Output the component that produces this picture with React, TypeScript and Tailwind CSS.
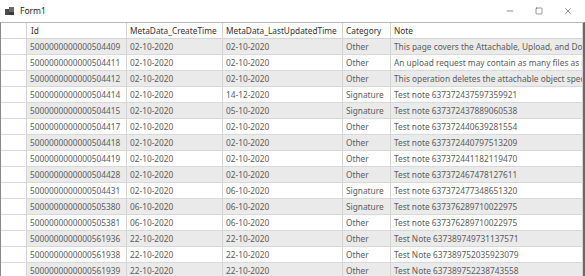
import { Minus, Square, X } from "lucide-react";

type Row = {
  id: string;
  created: string;
  updated: string;
  category: string;
  note: string;
};

const rows: Row[] = [
  { id: "5000000000000504409", created: "02-10-2020", updated: "02-10-2020", category: "Other", note: "This page covers the Attachable, Upload, and Download resources" },
  { id: "5000000000000504411", created: "02-10-2020", updated: "02-10-2020", category: "Other", note: "An upload request may contain as many files as needed" },
  { id: "5000000000000504412", created: "02-10-2020", updated: "02-10-2020", category: "Other", note: "This operation deletes the attachable object specified" },
  { id: "5000000000000504414", created: "02-10-2020", updated: "14-12-2020", category: "Signature", note: "Test note 637372437597359921" },
  { id: "5000000000000504415", created: "02-10-2020", updated: "05-10-2020", category: "Signature", note: "Test note 637372437889060538" },
  { id: "5000000000000504417", created: "02-10-2020", updated: "02-10-2020", category: "Other", note: "Test note 637372440639281554" },
  { id: "5000000000000504418", created: "02-10-2020", updated: "02-10-2020", category: "Other", note: "Test note 637372440797513209" },
  { id: "5000000000000504419", created: "02-10-2020", updated: "02-10-2020", category: "Other", note: "Test note 637372441182119470" },
  { id: "5000000000000504428", created: "02-10-2020", updated: "02-10-2020", category: "Other", note: "Test note 637372467478127611" },
  { id: "5000000000000504431", created: "02-10-2020", updated: "06-10-2020", category: "Signature", note: "Test note 637372477348651320" },
  { id: "5000000000000505380", created: "06-10-2020", updated: "06-10-2020", category: "Signature", note: "Test note 637376289710022975" },
  { id: "5000000000000505381", created: "06-10-2020", updated: "06-10-2020", category: "Other", note: "Test note 637376289710022975" },
  { id: "5000000000000561936", created: "22-10-2020", updated: "22-10-2020", category: "Other", note: "Test Note 637389749731137571" },
  { id: "5000000000000561938", created: "22-10-2020", updated: "22-10-2020", category: "Other", note: "Test Note 637389752035923079" },
  { id: "5000000000000561939", created: "22-10-2020", updated: "22-10-2020", category: "Other", note: "Test Note 637389752238743558" },
];

const FormIcon = () => (
  <svg width="10" height="10" viewBox="0 0 10 10">
    <rect x="0" y="3" width="4" height="6" fill="#4a4a4a" />
    <rect x="4" y="1" width="5" height="5" fill="#6a6a6a" />
    <rect x="4" y="6" width="5" height="3" fill="#3a3a3a" />
  </svg>
);

const App = () => {
  return (
    <div
      className="w-[585px] h-[276px] overflow-hidden bg-white flex flex-col text-[8.3px] text-[#5c5c5c]"
      style={{ fontFamily: '"Noto Sans", "Open Sans", sans-serif' }}
    >
      {/* title bar */}
      <div className="h-[22px] flex items-center shrink-0">
        <div className="flex items-center gap-[5px] pl-[5px] flex-1">
          <FormIcon />
          <span className="text-[#222] text-[8.5px]">Form1</span>
        </div>
        <div className="flex items-center text-[#333] pr-[3px]">
          <div className="w-[29px] flex justify-center"><Minus size={10} strokeWidth={1.3} /></div>
          <div className="w-[29px] flex justify-center"><Square size={8} strokeWidth={1.5} /></div>
          <div className="w-[29px] flex justify-center"><X size={10} strokeWidth={1.3} /></div>
        </div>
      </div>

      {/* grid */}
      <div className="flex-1 flex flex-col border-l border-[#8a8a8a] border-r-2 border-r-[#6a6a6a] border-t border-t-[#b8b8b8] overflow-hidden">
        <div className="flex h-[16px] shrink-0 border-b border-[#d4d4d4] text-[#333]">
          <div className="w-[26px] shrink-0 border-r border-[#d4d4d4]" />
          <div className="w-[100px] shrink-0 border-r border-[#d4d4d4] pl-[4px] leading-[15px]">Id</div>
          <div className="w-[96px] shrink-0 border-r border-[#d4d4d4] pl-[3px] leading-[15px] whitespace-nowrap">MetaData_CreateTime</div>
          <div className="w-[120px] shrink-0 border-r border-[#d4d4d4] pl-[3px] leading-[15px] whitespace-nowrap">MetaData_LastUpdatedTime</div>
          <div className="w-[48px] shrink-0 border-r border-[#d4d4d4] pl-[3px] leading-[15px]">Category</div>
          <div className="flex-1 pl-[3px] leading-[15px] border-r border-[#d4d4d4]">Note</div>
        </div>
        {rows.map((r, i) => (
          <div key={r.id} className="flex h-[16px] shrink-0 border-b border-[#d8d8d8]">
            <div className="w-[26px] shrink-0 border-r border-[#d4d4d4] bg-white" />
            <div className={`flex flex-1 min-w-0 ${i % 2 === 0 ? "bg-[#eaeaea]" : "bg-white"}`}>
              <div className="w-[100px] shrink-0 border-r border-[#d4d4d4] pl-[3px] leading-[15px] whitespace-nowrap overflow-hidden">{r.id}</div>
              <div className="w-[96px] shrink-0 border-r border-[#d4d4d4] pl-[3px] leading-[15px]">{r.created}</div>
              <div className="w-[120px] shrink-0 border-r border-[#d4d4d4] pl-[3px] leading-[15px]">{r.updated}</div>
              <div className="w-[48px] shrink-0 border-r border-[#d4d4d4] pl-[3px] leading-[15px]">{r.category}</div>
              <div className="flex-1 min-w-0 pl-[3px] leading-[15px] whitespace-nowrap overflow-hidden border-r border-[#d4d4d4]">{r.note}</div>
            </div>
          </div>
        ))}
      </div>
    </div>
  );
};

export default App;
